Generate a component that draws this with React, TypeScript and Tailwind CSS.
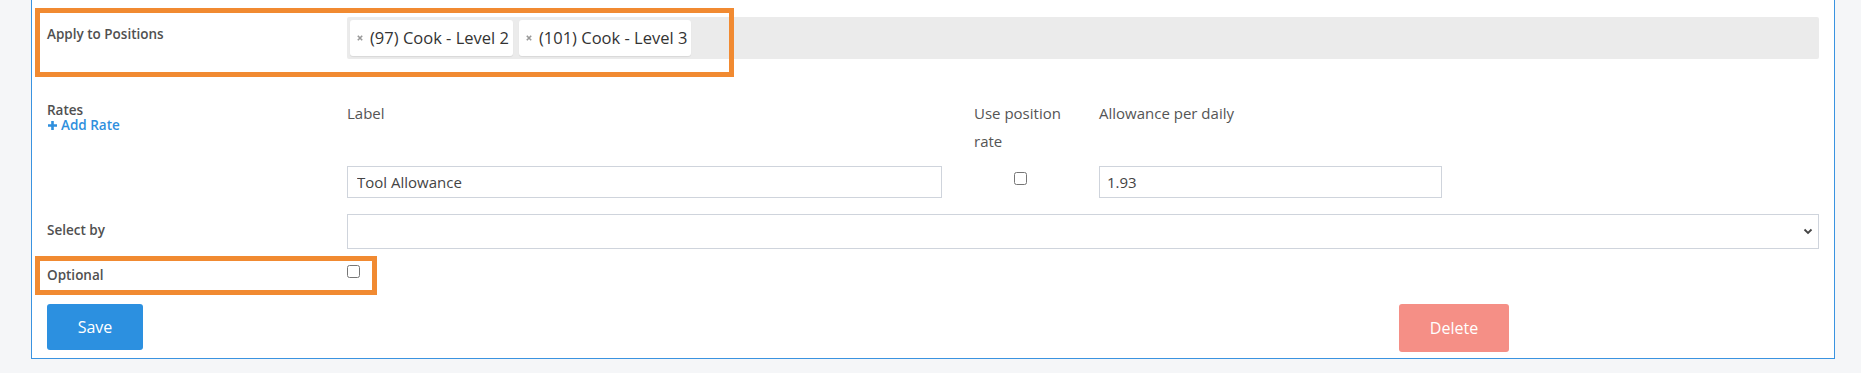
import React from "react";

const positions = ["(97) Cook - Level 2", "(101) Cook - Level 3"];

const font = { fontFamily: '"Open Sans", "Liberation Sans", sans-serif' };

function Highlight({ className }: { className: string }) {
    return (
        <div
            className={`pointer-events-none absolute border-[5px] border-[#f18a31] ${className}`}
        />
    );
}

function FieldLabel({ children, className = "" }: { children: React.ReactNode; className?: string }) {
    return (
        <div className={`w-[300px] shrink-0 text-[13.5px] font-semibold leading-[20px] text-[#505050] ${className}`}>
            {children}
        </div>
    );
}

export default function App() {
    return (
        <div className="min-h-[373px] bg-[#f5f6f8] pl-[31px] pr-[26px]" style={font}>
            <div className="border-x border-b border-[#3a93e0] bg-white px-[15px] pt-[17px] pb-[6px]">
                {/* Apply to positions */}
                <div className="relative flex">
                    <Highlight className="-top-[9px] -left-[12px] h-[69px] w-[699px]" />
                    <FieldLabel className="pt-[7px]">Apply to Positions</FieldLabel>
                    <div className="flex h-[42px] flex-1 items-start gap-[6px] rounded-[2px] bg-[#ebebeb] p-[3px]">
                        {positions.map((p) => (
                            <span
                                key={p}
                                className="flex h-[36px] items-center rounded-[3px] bg-white pl-[7px] pr-[4px] text-[16.5px] text-[#333] shadow-[0_1px_1px_rgba(0,0,0,0.08)]"
                            >
                                <svg className="mr-[7px]" width="6" height="6" viewBox="0 0 6 6">
                                    <path d="M0.8 0.8l4.4 4.4M5.2 0.8L0.8 5.2" stroke="#999" strokeWidth="1.6" />
                                </svg>
                                {p}
                            </span>
                        ))}
                    </div>
                </div>

                {/* Rates */}
                <div className="mt-[40px] flex">
                    <div className="w-[300px] shrink-0 pt-[4px] text-[13.5px] font-semibold leading-[15px]">
                        <div className="text-[#505050]">Rates</div>
                        <a className="flex items-center gap-[3px] text-[#2f8fdd]" href="#">
                            <svg width="11" height="11" viewBox="0 0 11 11">
                                <path d="M5.5 1v9M1 5.5h9" stroke="currentColor" strokeWidth="2.6" />
                            </svg>
                            Add Rate
                        </a>
                    </div>
                    <div className="grid grid-cols-[595px_93px_343px] gap-x-[32px] gap-y-[11px] text-[15px] leading-[28px] text-[#555]">
                        <div>Label</div>
                        <div>Use position rate</div>
                        <div>Allowance per daily</div>
                        <input
                            className="h-[32px] border border-[#cfd4dc] px-[9px] text-[15px] text-[#444] outline-none"
                            defaultValue="Tool Allowance"
                        />
                        <div className="flex justify-center pt-[6px]">
                            <input type="checkbox" className="m-0 h-[13px] w-[13px]" />
                        </div>
                        <input
                            className="h-[32px] border border-[#cfd4dc] px-[7px] text-[15px] text-[#444] outline-none"
                            defaultValue="1.93"
                        />
                    </div>
                </div>

                {/* Select by */}
                <div className="mt-[16px] flex">
                    <FieldLabel className="pt-[6px]">Select by</FieldLabel>
                    <div className="relative flex-1">
                        <select className="h-[35px] w-full appearance-none border border-[#cfd4dc] bg-white px-[8px] text-[15px] outline-none">
                            <option></option>
                        </select>
                        <svg
                            className="pointer-events-none absolute right-[6px] top-[14px]"
                            width="10"
                            height="7"
                            viewBox="0 0 10 7"
                        >
                            <path d="M1.5 1.5 5 5l3.5-3.5" fill="none" stroke="#444" strokeWidth="1.8" />
                        </svg>
                    </div>
                </div>

                {/* Optional */}
                <div className="relative mt-[16px] flex">
                    <Highlight className="-top-[9px] -left-[12px] h-[39px] w-[342px]" />
                    <FieldLabel>Optional</FieldLabel>
                    <input type="checkbox" className="m-0 h-[13px] w-[13px]" />
                </div>

                {/* Actions */}
                <div className="mt-[19px] flex items-start justify-between pr-[310px]">
                    <button className="h-[46px] w-[96px] rounded-[3px] bg-[#2c90e0] text-[16px] text-white">
                        Save
                    </button>
                    <button className="h-[48px] w-[110px] rounded-[3px] bg-[#f58f86] text-[16px] text-white">
                        Delete
                    </button>
                </div>
            </div>
        </div>
    );
}
